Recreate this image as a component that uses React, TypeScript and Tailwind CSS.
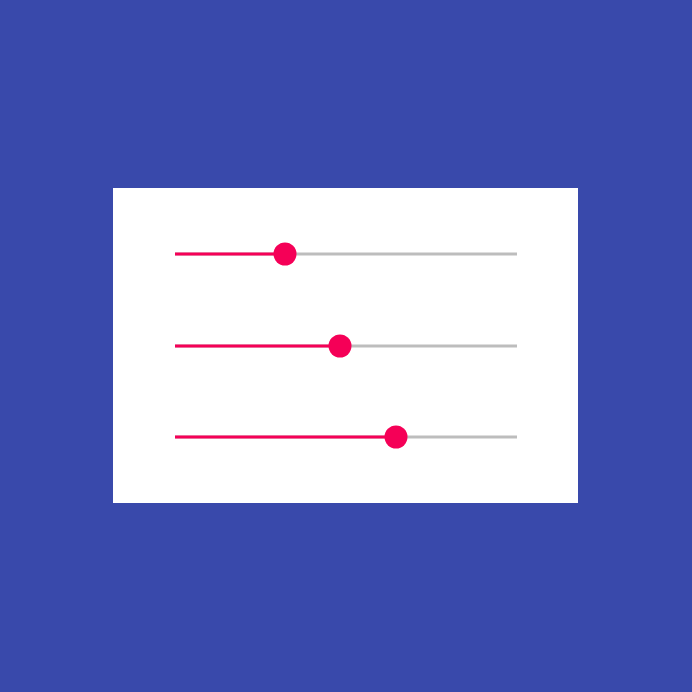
import React from "react";

const sliders = [110.5, 165, 221];

function Slider({ offset }: { offset: number }) {
  return (
    <div className="relative h-[91.5px] w-[342px]">
      <div className="absolute left-0 right-0 top-1/2 h-[3px] -translate-y-1/2 bg-[#bdbdbd]" />
      <div
        className="absolute left-0 top-1/2 h-[3px] -translate-y-1/2 bg-[#f50057]"
        style={{ width: offset }}
      />
      <div
        className="absolute top-1/2 h-[23px] w-[23px] -translate-x-1/2 -translate-y-1/2 rounded-full bg-[#f50057]"
        style={{ left: offset }}
      />
    </div>
  );
}

export default function App() {
  return (
    <div className="flex h-[692px] w-[692px] items-center justify-center bg-[#3949ab] pb-px pr-px">
      <div className="flex h-[315px] w-[465px] flex-col items-center justify-center bg-white">
        {sliders.map((o, i) => (
          <Slider key={i} offset={o} />
        ))}
      </div>
    </div>
  );
}
